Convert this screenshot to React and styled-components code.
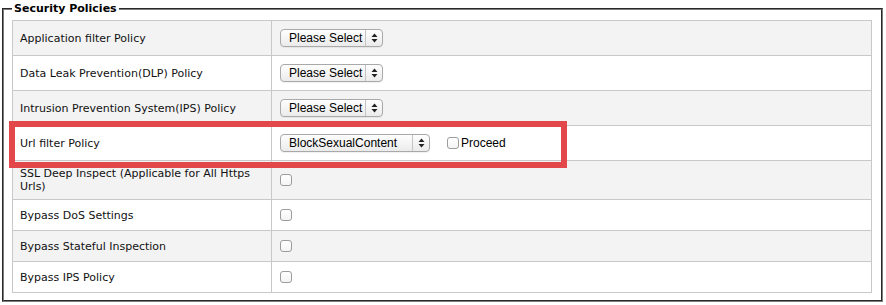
import React from 'react'
import styled, { createGlobalStyle } from 'styled-components'

const GlobalStyle = createGlobalStyle`
    body {
        margin: 0;
        background: #fff;
        font-family: "DejaVu Sans", Verdana, sans-serif;
        color: #000;
    }
`;

const rows = [
    { label: 'Application filter Policy', kind: 'select', value: 'Please Select' },
    { label: 'Data Leak Prevention(DLP) Policy', kind: 'select', value: 'Please Select' },
    { label: 'Intrusion Prevention System(IPS) Policy', kind: 'select', value: 'Please Select' },
    { label: 'Url filter Policy', kind: 'url', value: 'BlockSexualContent' },
    { label: 'SSL Deep Inspect (Applicable for All Https Urls)', kind: 'check' },
    { label: 'Bypass DoS Settings', kind: 'check' },
    { label: 'Bypass Stateful Inspection', kind: 'check' },
    { label: 'Bypass IPS Policy', kind: 'check' },
];

const Arrows = () => (
    <svg width="7" height="10" viewBox="0 0 7 10">
        <path d="M3.5 0.5 L6.5 4 L0.5 4 Z" fill="#222" />
        <path d="M3.5 9.5 L6.5 6 L0.5 6 Z" fill="#222" />
    </svg>
);

const Select = ({ value, width }) => (
    <SelectBox $width={width}>
        <SelectLabel>{value}</SelectLabel>
        <SelectArrow><Arrows /></SelectArrow>
    </SelectBox>
);

const App = () => {
    return (
        <Page>
            <GlobalStyle />
            <Fieldset>
                <Legend>Security Policies</Legend>
                <Table>
                    <tbody>
                        {rows.map((row, i) => (
                            <Row key={row.label} $odd={i % 2 === 0}>
                                <LabelCell>{row.label}</LabelCell>
                                <ValueCell>
                                    {row.kind === 'select' && <Select value={row.value} width={103} />}
                                    {row.kind === 'url' && (
                                        <Inline>
                                            <Select value={row.value} width={150} />
                                            <ProceedLabel>
                                                <Checkbox type="checkbox" $inline />
                                                Proceed
                                            </ProceedLabel>
                                        </Inline>
                                    )}
                                    {row.kind === 'check' && <Checkbox type="checkbox" />}
                                </ValueCell>
                            </Row>
                        ))}
                    </tbody>
                </Table>
            </Fieldset>
            <Highlight />
        </Page>
    )
}

export default App

const Page = styled.div`
    position: relative;
    width: 886px;
    height: 305px;
    box-sizing: border-box;
`;

const Fieldset = styled.fieldset`
    margin: 0 3px 0 2px;
    padding: 2px 9px 7px 8px;
    border: 2px groove #7c7c7c;
    min-width: 0;
`;

const Legend = styled.legend`
    padding: 0 2px;
    margin-left: 0;
    font-size: 11px;
    font-weight: 700;
    line-height: 18px;
`;

const Table = styled.table`
    width: 100%;
    border-collapse: collapse;
    border: 1px solid #c8c8c8;
    font-size: 11px;
    line-height: 13px;
    color: #111;
`;

const Row = styled.tr`
    background: ${p => (p.$odd ? '#f3f3f3' : '#fff')};
`;

const LabelCell = styled.td`
    width: 244px;
    padding: 6px 7px;
    border: 1px solid #c8c8c8;
    vertical-align: middle;
`;

const ValueCell = styled.td`
    padding: 6px 7px;
    border: 1px solid #c8c8c8;
    vertical-align: middle;
`;

const Inline = styled.div`
    display: flex;
    align-items: center;
`;

const SelectBox = styled.div`
    display: flex;
    box-sizing: border-box;
    width: ${p => p.$width}px;
    height: 18px;
    margin: 2px 0 2px 1px;
    border: 1px solid #a9a9a9;
    border-radius: 4px;
    background: linear-gradient(#fefefe, #ebebeb);
    box-shadow: 0 1px 1px rgba(0, 0, 0, 0.06);
    font-family: "Liberation Sans", Arial, sans-serif;
    font-size: 12px;
    line-height: 16px;
    color: #000;
`;

const SelectLabel = styled.span`
    flex: 1;
    padding-left: 8px;
    white-space: nowrap;
    overflow: hidden;
`;

const SelectArrow = styled.span`
    width: 16px;
    border-left: 1px solid #c4c4c4;
    display: flex;
    align-items: center;
    justify-content: center;
`;

const Checkbox = styled.input`
    appearance: none;
    display: block;
    box-sizing: border-box;
    width: 12px;
    height: 12px;
    margin: ${p => (p.$inline ? '0 2px 0 0' : '3px 0 3px 1px')};
    border: 1px solid #9c9c9c;
    border-radius: 3px;
    background: linear-gradient(#fff, #f4f4f4);
`;

const ProceedLabel = styled.label`
    display: flex;
    align-items: center;
    margin-left: 17px;
    font-family: "Liberation Sans", Arial, sans-serif;
    font-size: 12px;
    color: #000;
`;

const Highlight = styled.div`
    position: absolute;
    left: 9px;
    top: 121px;
    width: 558px;
    height: 47px;
    box-sizing: border-box;
    border: 6px solid #e2474a;
    pointer-events: none;
`;
